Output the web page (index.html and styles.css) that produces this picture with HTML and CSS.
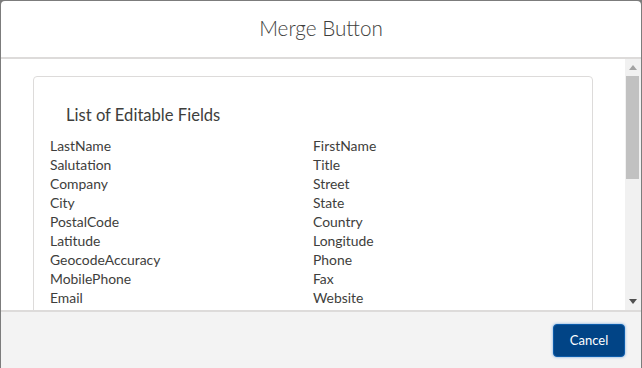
FILE: index.html
```html
<!DOCTYPE html>
<html lang="en">

<head>
    <meta charset="UTF-8">
    <title>Merge Button</title>
    <link rel="stylesheet" href="styles.css">
</head>

<body>
    <div class="modal">
        <div class="modal-header">
            <h2>Merge Button</h2>
        </div>

        <div class="modal-body">
            <div class="body-content">
                <div class="card">
                    <h3>List of Editable Fields</h3>
                    <ul class="field-list">
                        <li>LastName</li>
                        <li>FirstName</li>
                        <li>Salutation</li>
                        <li>Title</li>
                        <li>Company</li>
                        <li>Street</li>
                        <li>City</li>
                        <li>State</li>
                        <li>PostalCode</li>
                        <li>Country</li>
                        <li>Latitude</li>
                        <li>Longitude</li>
                        <li>GeocodeAccuracy</li>
                        <li>Phone</li>
                        <li>MobilePhone</li>
                        <li>Fax</li>
                        <li>Email</li>
                        <li>Website</li>
                    </ul>
                </div>
            </div>

            <!-- scrollbar drawn by hand, headless browser hides the real one -->
            <div class="scrollbar">
                <div class="scroll-btn">
                    <svg width="8" height="5" viewBox="0 0 8 5"><polygon points="0,5 8,5 4,0" fill="#a3a3a3" /></svg>
                </div>
                <div class="scroll-track">
                    <div class="scroll-thumb"></div>
                </div>
                <div class="scroll-btn">
                    <svg width="8" height="5" viewBox="0 0 8 5"><polygon points="0,0 8,0 4,5" fill="#505050" /></svg>
                </div>
            </div>
        </div>

        <div class="modal-footer">
            <button class="btn-cancel">Cancel</button>
        </div>
    </div>
</body>

</html>
```

FILE: styles.css
```css
html,
body {
    margin: 0;
    padding: 0;
    height: 100%;
    font-family: Lato, "Open Sans", sans-serif;
    background-color: #7c7c7c;
    overflow: hidden;
}

.modal {
    margin: 1px 1px 0 1px;
    height: 367px;
    background-color: #fff;
    border-radius: 4px 4px 0 0;
    display: flex;
    flex-direction: column;
    overflow: hidden;
}

.modal-header {
    height: 58px;
    border-bottom: 2px solid #dddbda;
    display: flex;
    justify-content: center;
    align-items: center;
    flex-shrink: 0;
    box-sizing: border-box;
    padding-bottom: 2px;
}

.modal-header h2 {
    margin: 0;
    font-size: 20.7px;
    font-weight: 300;
    color: #3e3e3c;
}

.modal-body {
    flex: 1;
    display: flex;
    min-height: 0;
}

.body-content {
    flex: 1;
    overflow: hidden;
    padding: 17px 32px 0 32px;
}

.scrollbar {
    width: 16px;
    background-color: #f1f1f1;
    display: flex;
    flex-direction: column;
}

.scroll-btn {
    height: 17px;
    display: flex;
    justify-content: center;
    align-items: center;
}

.scroll-track {
    flex: 1;
    padding: 0 2px 0 1px;
}

.scroll-thumb {
    height: 103px;
    background-color: #c1c1c1;
}

.card {
    border: 1px solid #dddbda;
    border-radius: 4px;
    padding: 26px 16px 40px 16px;
}

.card h3 {
    margin: 0 0 9px 16px;
    font-size: 16.6px;
    line-height: 24px;
    font-weight: 400;
    color: #3e3e3c;
}

.field-list {
    list-style: none;
    margin: 0;
    padding: 0;
    display: grid;
    grid-template-columns: 1fr 1fr;
}

.field-list li {
    font-size: 13.9px;
    line-height: 19px;
    color: #3e3e3c;
}

.modal-footer {
    flex-shrink: 0;
    border-top: 2px solid #dddbda;
    background-color: #f3f3f3;
    height: 56px;
    padding: 0 16px;
    display: flex;
    justify-content: flex-end;
    align-items: center;
}

.btn-cancel {
    font-family: Lato, "Open Sans", sans-serif;
    font-size: 13px;
    color: #fff;
    background-color: #014486;
    border: 1px solid #0b5cab;
    border-radius: 4px;
    width: 72px;
    height: 33px;
    box-shadow: 0 0 3px #6ea5e0;
    cursor: pointer;
}
```
